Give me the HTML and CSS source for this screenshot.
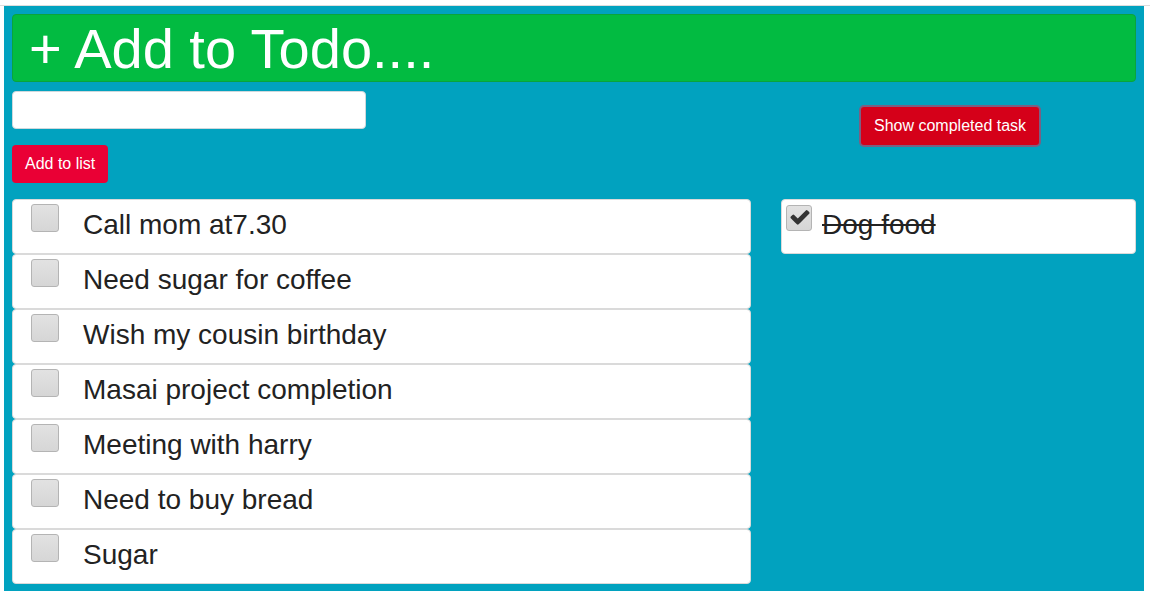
FILE: index.html
```html
<!DOCTYPE html>
<html>
<head>
<meta charset="utf-8">
<link rel="stylesheet" href="styles.css">
</head>
<body>
<div class="topline"></div>
<div class="app">
  <div class="header">+ Add to Todo....</div>
  <div class="controls">
    <div class="add-col">
      <input class="task-input" type="text">
      <button class="add-btn">Add to list</button>
    </div>
    <div class="show-col">
      <button class="show-btn">Show completed task</button>
    </div>
  </div>
  <div class="lists">
    <ul class="todo-list">
      <li class="item"><span class="box"></span><span class="label">Call mom at7.30</span></li>
      <li class="item"><span class="box"></span><span class="label">Need sugar for coffee</span></li>
      <li class="item"><span class="box"></span><span class="label">Wish my cousin birthday</span></li>
      <li class="item"><span class="box"></span><span class="label">Masai project completion</span></li>
      <li class="item"><span class="box"></span><span class="label">Meeting with harry</span></li>
      <li class="item"><span class="box"></span><span class="label">Need to buy bread</span></li>
      <li class="item"><span class="box"></span><span class="label">Sugar</span></li>
    </ul>
    <ul class="done-list">
      <li class="item done"><span class="box checked"><svg class="check" viewBox="0 0 1792 1792" width="22" height="22"><path d="M1671 566q0 40-28 68l-724 724-136 136q-28 28-68 28t-68-28l-136-136-362-362q-28-28-28-68t28-68l136-136q28-28 68-28t68 28l294 295 656-657q28-28 68-28t68 28l136 136q28 28 28 68z" fill="#333333"/></svg></span><span class="label">Dog food</span></li>
    </ul>
  </div>
</div>
</body>
</html>
```
FILE: styles.css
```css
html, body {
  margin: 0;
  padding: 0;
  background: #ffffff;
  font-family: "Liberation Sans", Arial, sans-serif;
}
body {
  padding-top: 5px;
}
.topline {
  height: 1px;
  background: #dddddd;
}
.app {
  width: 1140px;
  margin-left: 4px;
  background: #01a2bf;
  padding: 8px;
  box-sizing: border-box;
  height: 585px;
}
.header {
  height: 68px;
  box-sizing: border-box;
  background: #02bb41;
  border: 1px solid #0ba33c;
  border-radius: 4px;
  color: #ffffff;
  font-size: 56px;
  line-height: 68px;
  padding-left: 16px;
  margin-bottom: 9px;
}
.controls {
  display: flex;
}
.add-col {
  width: 769px;
  display: flex;
  flex-direction: column;
  align-items: flex-start;
}
.task-input {
  width: 354px;
  height: 38px;
  box-sizing: border-box;
  border: 1px solid #cfd8dc;
  border-radius: 4px;
  background: #ffffff;
  margin: 0 0 16px 0;
  padding: 0 10px;
  font-size: 16px;
}
.add-btn {
  height: 38px;
  padding: 0 13px;
  border: none;
  border-radius: 4px;
  background: #ea0035;
  color: #ffffff;
  font-family: "Liberation Sans", Arial, sans-serif;
  font-size: 16px;
}
.show-col {
  flex: 1;
  padding-top: 14px;
  padding-left: 78px;
}
.show-btn {
  height: 42px;
  padding: 0 13px;
  border: 2px solid #7b5f82;
  border-radius: 5px;
  background: #d50019;
  color: #ffffff;
  font-family: "Liberation Sans", Arial, sans-serif;
  font-size: 16px;
}
.lists {
  display: flex;
  margin-top: 16px;
  gap: 30px;
}
ul {
  list-style: none;
  margin: 0;
  padding: 0;
}
.todo-list {
  width: 739px;
}
.done-list {
  width: 355px;
}
.item {
  height: 55px;
  box-sizing: border-box;
  background: #ffffff;
  border: 1px solid #dadada;
  border-radius: 4px;
  display: flex;
  align-items: flex-start;
  padding: 4px 0 0 18px;
  color: #222222;
  font-size: 28px;
}
.box {
  width: 28px;
  height: 28px;
  box-sizing: border-box;
  flex: none;
  background: linear-gradient(#e2e2e2, #d6d6d6);
  border: 1px solid #b4b4b4;
  border-radius: 3px;
  margin-right: 24px;
}
.label {
  line-height: 40px;
  padding-top: 1px;
}
.done {
  padding-left: 4px;
}
.box.checked {
  position: relative;
  width: 26px;
  height: 26px;
  margin-top: 1px;
  margin-right: 10px;
}
.check {
  position: absolute;
  left: 2px;
  top: 0;
}
.done .label {
  text-decoration: line-through;
}
```
